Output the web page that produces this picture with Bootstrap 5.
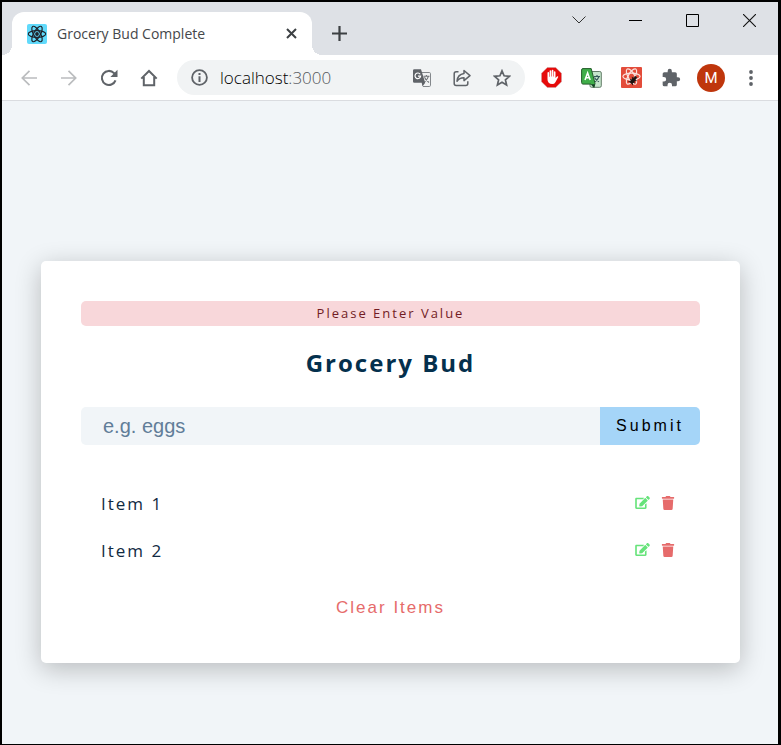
<!DOCTYPE html>
<html lang="en">
<head>
<meta charset="utf-8">
<meta name="viewport" content="width=device-width, initial-scale=1">
<title>Grocery Bud Complete</title>
<link href="https://cdn.jsdelivr.net/npm/bootstrap@5.3.0/dist/css/bootstrap.min.css" rel="stylesheet">
<style>
body { font-family: "Open Sans", "Noto Sans", sans-serif; background: #f1f5f8; color: #102a42; border: solid #000; border-width: 2px 3px 1px 2px; }
svg { display: block; flex: none; }
button { font-family: inherit; }
.icon-btn { border: 0; background: none; padding: 0; display: flex; align-items: center; justify-content: center; }
.tab-strip { background: #dee1e6; height: 53px; padding-left: 10px; }
.browser-tab { position: relative; width: 300px; height: 43px; padding: 0 12px 0 15px; gap: 10px; background: #fff; border-radius: 12px 12px 0 0; font-size: 14px; color: #45474a; }
.browser-tab::before, .browser-tab::after { content: ""; position: absolute; bottom: 0; width: 10px; height: 10px; }
.browser-tab::before { right: 100%; background: radial-gradient(circle at 0 0, transparent 10px, #fff 10px); }
.browser-tab::after { left: 100%; background: radial-gradient(circle at 100% 0, transparent 10px, #fff 10px); }
.tab-close { width: 17px; height: 24px; }
.new-tab { width: 54px; height: 43px; }
.window-btn { width: 57px; height: 36px; }
.toolbar { background: #fff; height: 46px; padding: 0 7px; border-bottom: 1px solid #dadce0; }
.tool-btn { width: 40px; height: 36px; }
.omnibox { height: 35px; margin: 0 6px 0 8px; padding: 0 3px 0 14px; background: #f1f3f4; border-radius: 18px; font-size: 17px; font-weight: 300; color: #000; }
.port { color: #55585c; }
.avatar-disc { width: 28px; height: 28px; border-radius: 50%; background: #bf360c; color: #fff; font: 15px/28px Roboto, sans-serif; }
.page { padding: 160px 38px 80px 39px; }
.bud { border-radius: 5px; padding: 40px 40px 44px; box-shadow: 0 6px 26px rgba(0, 0, 0, .24); }
.notice { background: #f8d7da; color: #721c24; border-radius: 5px; font-size: 13px; line-height: 25px; letter-spacing: 2px; }
.bud-title { font-size: 24px; line-height: 34px; letter-spacing: 2px; font-weight: 700; color: #04304d; margin: 20px 0 27px; }
.bud-input { min-width: 0; height: 38px; padding: 0 22px; border: 0; background: #f1f5f8; border-radius: 5px 0 0 5px; font: 20px "Liberation Sans", Arial, sans-serif; color: #324d67; }
.bud-input::placeholder { color: #617d98; opacity: 1; }
.bud-submit { width: 100px; border: 0; background: #a5d5f8; border-radius: 0 5px 5px 0; font: 16px "Liberation Sans", Arial, sans-serif; letter-spacing: 3px; color: #000; padding: 0; }
.bud-list { margin: 40px 0 0; padding: 0; }
.bud-item { padding: 0 25px 0 20px; height: 37px; margin-bottom: 10px; font-size: 17px; letter-spacing: 2px; }
.bud-actions { gap: 11px; padding-bottom: 2px; }
.bud-clear { border: 0; background: none; color: #e66b6b; font: 17px/20px "Liberation Sans", Arial, sans-serif; letter-spacing: 2px; margin-top: 18px; }
</style>
<script src="https://cdn.jsdelivr.net/npm/bootstrap@5.3.0/dist/js/bootstrap.bundle.min.js"></script>
</head>
<body class="min-vh-100">
<svg width="0" height="0" class="position-absolute" aria-hidden="true">
  <symbol id="edit" viewBox="0 0 576 512"><path fill="#66e37a" d="M402.600 83.200l90.200 90.200c3.800 3.800 3.800 10 0 13.800L274.400 405.600l-92.800 10.300c-12.400 1.400-22.900-9.100-21.500-21.500l10.300-92.800L388.800 83.200c3.800-3.800 10-3.800 13.800 0zm162-22.900l-48.800-48.800c-15.200-15.200-39.900-15.200-55.200 0l-35.400 35.400c-3.800 3.800-3.800 10 0 13.800l90.200 90.200c3.800 3.800 10 3.800 13.800 0l35.400-35.400c15.200-15.300 15.200-40 0-55.200zM384 346.200V448H64V128h229.800c3.200 0 6.200-1.300 8.500-3.500l40-40c7.600-7.600 2.200-20.500-8.500-20.500H48C21.500 64 0 85.500 0 112v352c0 26.500 21.500 48 48 48h352c26.500 0 48-21.500 48-48V306.200c0-10.700-12.900-16-20.500-8.500l-40 40c-2.200 2.300-3.500 5.300-3.500 8.500z"/></symbol>
  <symbol id="trash" viewBox="0 0 448 512"><path fill="#e66b6b" d="M432 32H312l-9.400-18.700A24 24 0 0 0 281.100 0H166.800a23.700 23.700 0 0 0-21.400 13.300L136 32H16A16 16 0 0 0 0 48v32a16 16 0 0 0 16 16h416a16 16 0 0 0 16-16V48a16 16 0 0 0-16-16zM53.200 467a48 48 0 0 0 47.900 45h245.800a48 48 0 0 0 47.900-45L416 128H32z"/></symbol>
</svg>

<header>
  <div class="tab-strip d-flex align-items-end">
    <div class="browser-tab d-flex align-items-center">
      <svg width="20" height="20" viewBox="0 0 20 20"><rect width="20" height="20" rx="2" fill="#61dafb"/><g fill="none" stroke="#20232a" stroke-width="1.200"><ellipse cx="10" cy="10" rx="8.700" ry="3.300"/><ellipse cx="10" cy="10" rx="8.700" ry="3.300" transform="rotate(60 10 10)"/><ellipse cx="10" cy="10" rx="8.700" ry="3.300" transform="rotate(120 10 10)"/></g><circle cx="10" cy="10" r="1.900" fill="#20232a"/></svg>
      <span class="flex-grow-1">Grocery Bud Complete</span>
      <button class="icon-btn tab-close" aria-label="Close tab"><svg width="11" height="11" viewBox="0 0 11 11"><path d="M1 1l9 9M10 1l-9 9" stroke="#3c4043" stroke-width="2"/></svg></button>
    </div>
    <button class="icon-btn new-tab" aria-label="New tab"><svg width="15" height="15" viewBox="0 0 15 15"><path d="M7.500 0v15M0 7.500h15" stroke="#3c4043" stroke-width="2.200"/></svg></button>
    <div class="d-flex ms-auto align-self-start">
      <button class="icon-btn window-btn" aria-label="Search tabs"><svg width="14" height="8" viewBox="0 0 14 8"><path d="M.5.5L7 7 13.500.5" fill="none" stroke="#333" stroke-width="1"/></svg></button>
      <button class="icon-btn window-btn" aria-label="Minimize"><svg width="13" height="1" viewBox="0 0 13 1"><path fill="#000" d="M0 0h13v1H0z"/></svg></button>
      <button class="icon-btn window-btn" aria-label="Maximize"><svg width="13" height="13" viewBox="0 0 13 13"><path d="M.5.5h12v12H.5z" fill="none" stroke="#000"/></svg></button>
      <button class="icon-btn window-btn" aria-label="Close"><svg width="13" height="13" viewBox="0 0 13 13"><path d="M0 0l13 13M13 0L0 13" stroke="#111" stroke-width="1.100"/></svg></button>
    </div>
  </div>

  <nav class="toolbar d-flex align-items-center" aria-label="Browser toolbar">
    <button class="icon-btn tool-btn" aria-label="Back"><svg width="16" height="16" viewBox="0 0 16 16"><path d="M16 8H1.500M8.500 .8L1.300 8l7.200 7.200" fill="none" stroke="#babcbe" stroke-width="1.700"/></svg></button>
    <button class="icon-btn tool-btn" aria-label="Forward"><svg width="16" height="16" viewBox="0 0 16 16"><path d="M0 8h14.500M7.500 .8L14.700 8l-7.200 7.200" fill="none" stroke="#babcbe" stroke-width="1.700"/></svg></button>
    <button class="icon-btn tool-btn" aria-label="Reload"><svg width="18" height="18" viewBox="0 0 18 18"><path d="M15.500 11.300A7 7 0 1 1 14 4.100l1.600 1.600" fill="none" stroke="#5f6368" stroke-width="2.100"/><path fill="#5f6368" d="M17.500 .8v7.100h-7.100z"/></svg></button>
    <button class="icon-btn tool-btn" aria-label="Home"><svg width="18" height="18" viewBox="0 0 18 18"><path d="M3.800 8v8.200h10.400V8M1.300 9.600L9 2l7.700 7.600" fill="none" stroke="#5f6368" stroke-width="2"/></svg></button>
    <div class="omnibox d-flex align-items-center flex-grow-1">
      <svg width="17" height="17" viewBox="0 0 17 17"><circle cx="8.500" cy="8.500" r="7.400" fill="none" stroke="#5f6368" stroke-width="1.800"/><path fill="#5f6368" d="M7.500 4h2v2h-2zM7.500 7.300h2V13h-2z"/></svg>
      <span class="flex-grow-1 ms-2 ps-1">localhost<span class="port">:3000</span></span>
      <button class="icon-btn tool-btn" aria-label="Translate this page"><svg width="18" height="18" viewBox="0 0 18 18"><path d="M7 3.500h9.300q1.200 0 1.200 1.200v11.600q0 1.200-1.200 1.200H10" fill="#f1f3f4" stroke="#83878b" stroke-width="1"/><path fill="#5f6368" d="M1.300.3H8L12.200 13.700 9.500 17.500 8.700 13.700H1.300Q0 13.700 0 12.400V1.600Q0 .3 1.300.3z"/><path d="M7.200 5.300A2.800 2.800 0 1 0 7.600 7.200H5" fill="none" stroke="#fff" stroke-width="1.200"/><path d="M10.500 7.200h6M13.400 6v1.200M15.500 7.200q-.8 3.200-4 5.800M11.500 8.300q1.300 3 4.500 5.200" fill="none" stroke="#6f7377" stroke-width="1.100"/></svg></button>
      <button class="icon-btn tool-btn" aria-label="Share"><svg width="18" height="18" viewBox="0 0 18 18"><path d="M5.500 2.700H3.200Q1.200 2.700 1.200 4.700v9.800q0 2 2 2h9.600q2 0 2-2v-2.300" fill="none" stroke="#5f6368" stroke-width="1.500"/><path d="M11 1.500L17 6.600l-6 5V8.700q-4.500-.1-7 3.500Q4.600 5.500 11 4.600z" fill="none" stroke="#5f6368" stroke-width="1.500" stroke-linejoin="round"/></svg></button>
      <button class="icon-btn tool-btn" aria-label="Bookmark this tab"><svg width="18" height="18" viewBox="0 0 18 18"><path d="M9 1.800l2.100 5 5.300.5-4 3.500 1.200 5.300L9 13.300l-4.600 2.800 1.200-5.300-4-3.500 5.300-.5z" fill="none" stroke="#5f6368" stroke-width="1.700"/></svg></button>
    </div>
    <button class="icon-btn tool-btn" aria-label="AdBlock"><svg width="21" height="21" viewBox="0 0 21 21"><path d="M6.300.5h8.400l5.800 5.800v8.400l-5.800 5.800H6.300L.5 14.700V6.300z" fill="#e60b0b" stroke="#c7a5a5" stroke-width=".5"/><path fill="#fff" d="M6.500 6q0-.9.800-.9t.8.900v3.800h.5V4.200q0-.9.800-.9t.8.900v5.200h.5V3.700q0-.9.900-.9t.8.900v5.700h.5V5.200q0-.9.800-.9t.8.900v5.900l1-1.200q.7-.8 1.600-.4.300.2 0 .7l-2.700 5q-1 1.900-3.200 1.900-4.700 0-4.700-4.800z"/></svg></button>
    <button class="icon-btn tool-btn" aria-label="Translator"><svg width="21" height="20" viewBox="0 0 21 20"><rect x="9" y="3.500" width="11.300" height="15.800" rx="1.500" fill="#c5e5cb" stroke="#637c68"/><path d="M13 8.500h6M16 7v1.500M18 8.500q-1 3-4 5.200M13.500 9.500q1.500 3 4.500 4.200" stroke="#365b5b" stroke-width="1.200" fill="none"/><path d="M2 .6h8.200l3.800 14.800-1 4-3-3.300H2Q.6 16 .6 14.600V2Q.6.600 2 .6z" fill="#3fae49" stroke="#245c2b" stroke-width="1"/><path d="M10.500 16.200h3.300l-1 3.200z" fill="#153e28"/><path d="M4 12l2.600-7 2.600 7M5 9.800h3.200" stroke="#fff" stroke-width="1.500" fill="none"/></svg></button>
    <button class="icon-btn tool-btn" aria-label="React Developer Tools"><svg width="21" height="21" viewBox="0 0 21 21"><rect width="21" height="21" rx="1" fill="#e34c3a"/><g fill="none" stroke="#fbe3df" stroke-width="1.200"><ellipse cx="10.500" cy="9.500" rx="8.600" ry="3.300"/><ellipse cx="10.500" cy="9.500" rx="8.600" ry="3.300" transform="rotate(60 10.500 9.500)"/><ellipse cx="10.500" cy="9.500" rx="8.600" ry="3.300" transform="rotate(120 10.500 9.500)"/></g><g transform="rotate(40 12 13.500)" fill="#1c1310" stroke="#1c1310" stroke-width=".8"><ellipse cx="12" cy="13.800" rx="1.700" ry="3"/><circle cx="12" cy="9.800" r="1.200"/><path d="M9 11.300l3 1.500M15 11.300l-3 1.500M8.500 14.300h7M9.200 17.300l2.800-2M14.800 17.300l-2.800-2" fill="none"/></g></svg></button>
    <button class="icon-btn tool-btn" aria-label="Extensions"><svg width="20" height="20" viewBox="0 0 24 24"><path fill="#5f6368" d="M20.500 11H19V7a2 2 0 0 0-2-2h-4V3.500a2.500 2.500 0 0 0-5 0V5H4a2 2 0 0 0-2 2v3.800h1.500a2.700 2.700 0 0 1 0 5.400H2V20a2 2 0 0 0 2 2h3.800v-1.500a2.700 2.700 0 0 1 5.400 0V22H17a2 2 0 0 0 2-2v-4h1.500a2.500 2.500 0 0 0 0-5z"/></svg></button>
    <button class="icon-btn tool-btn" aria-label="Profile"><span class="avatar-disc">M</span></button>
    <button class="icon-btn tool-btn" aria-label="Menu"><svg width="4" height="16" viewBox="0 0 4 16"><g fill="#5f6368"><circle cx="2" cy="2" r="1.900"/><circle cx="2" cy="8" r="1.900"/><circle cx="2" cy="14" r="1.900"/></g></svg></button>
  </nav>
</header>

<main class="page">
  <section class="bud bg-white text-center">
    <form>
      <p class="notice mb-0" role="alert">Please Enter Value</p>
      <h1 class="bud-title">Grocery Bud</h1>
      <div class="d-flex">
        <input class="bud-input flex-grow-1" type="text" placeholder="e.g. eggs" aria-label="Grocery item">
        <button class="bud-submit" type="button">Submit</button>
      </div>
    </form>
    <ul class="bud-list list-unstyled">
      <li class="bud-item d-flex align-items-center justify-content-between">
        <span>Item 1</span>
        <span class="bud-actions d-flex">
          <button class="icon-btn" aria-label="Edit Item 1"><svg width="15" height="13"><use href="#edit"/></svg></button>
          <button class="icon-btn" aria-label="Delete Item 1"><svg width="14" height="14"><use href="#trash"/></svg></button>
        </span>
      </li>
      <li class="bud-item d-flex align-items-center justify-content-between">
        <span>Item 2</span>
        <span class="bud-actions d-flex">
          <button class="icon-btn" aria-label="Edit Item 2"><svg width="15" height="13"><use href="#edit"/></svg></button>
          <button class="icon-btn" aria-label="Delete Item 2"><svg width="14" height="14"><use href="#trash"/></svg></button>
        </span>
      </li>
    </ul>
    <button class="bud-clear" type="button">Clear Items</button>
  </section>
</main>
</body>
</html>
